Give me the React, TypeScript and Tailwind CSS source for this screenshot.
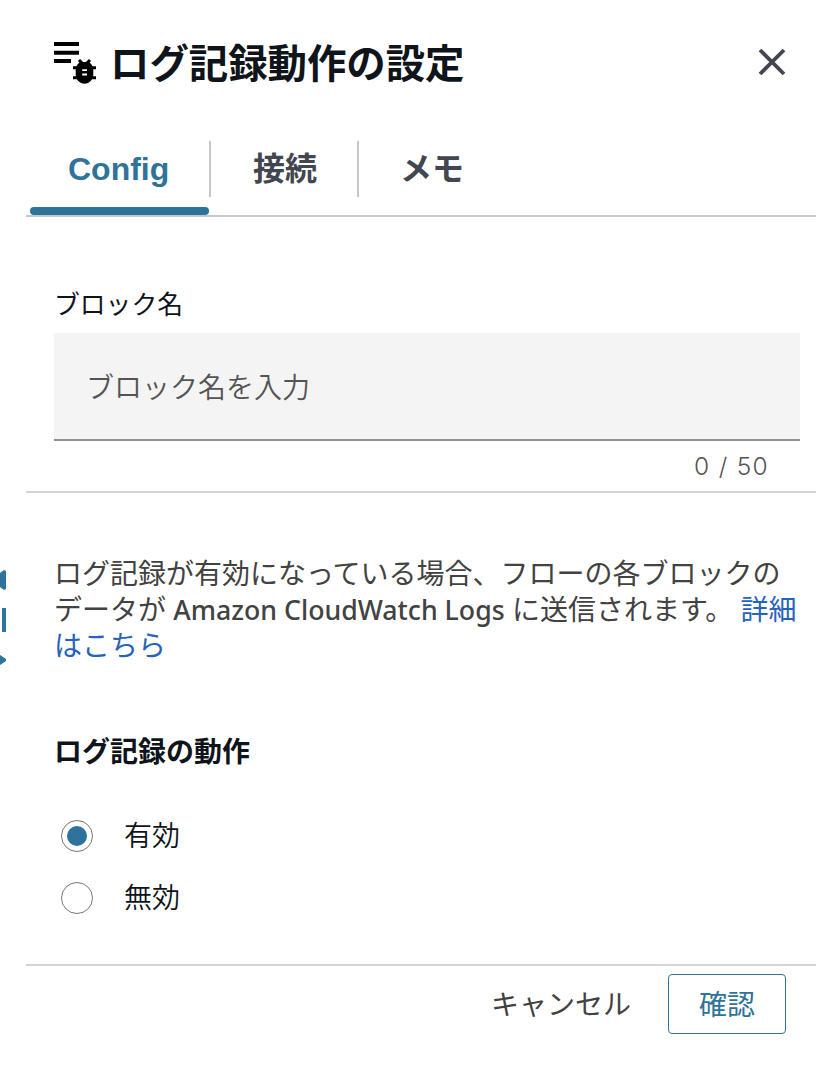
import React, { useState } from 'react';

const options = ['有効', '無効'];

const LogIcon = () => (
  <svg width="46" height="44" viewBox="0 0 46 44" className="mt-[41px] shrink-0">
    <path d="M0 1h25v4H0zM0 9.7h25v4H0zM0 18h17v4H0z" />
    <path d="M25 19l4 4M36 19l-4 4M19 26.8h23M19 36.8h23" stroke="#000" strokeWidth="3" />
    <path
      fillRule="evenodd"
      d="M26 21h9c3 2 4.300 5 4.300 8v4.500c0 5-3.900 9.200-8.800 9.200s-8.800-4.200-8.800-9.200V29c0-3 1.300-6 4.300-8zM28.200 28v2h4.800v-2zM28.200 32.500v2h4.800v-2z"
    />
  </svg>
);

const CanvasEdge = () => (
  <svg width="6" height="96" viewBox="0 0 6 96" className="mt-[570px] shrink-0" fill="#2e7399">
    <path d="M0 3 4 0l2 1v18l-2 1-4-3z" />
    <path d="M2 38h4v24H2z" />
    <path d="M0 85l6 4v2l-6 4z" />
  </svg>
);

const App: React.FC = () => {
  const [selected, setSelected] = useState('有効');

  return (
    <div className="flex h-[1086px] w-[816px] overflow-hidden bg-white font-['Noto_Sans_CJK_JP',sans-serif] text-[#0f141a]">
      <CanvasEdge />
      <div className="ml-5 flex w-[790px] flex-col">
        <header className="flex h-[141px] pl-7">
          <LogIcon />
          <h1 className="ml-[10px] mt-[31px] grow whitespace-nowrap text-[39.4px] font-bold leading-[60px]">ログ記録動作の設定</h1>
          <svg width="30" height="30" viewBox="0 0 30 30" className="mr-[29px] mt-[47px] shrink-0" stroke="#424650" strokeWidth="3.8">
            <path d="M3 3l24 24M27 3 3 27" />
          </svg>
        </header>

        <nav className="flex h-[76px] border-b-2 border-[#c6c6cd] text-[32px] font-bold leading-[56px] text-[#424650]">
          <div className="ml-1 flex w-[179px] flex-col text-[#2e7399]">
            <div className="h-[66px] pl-[38px] font-['Liberation_Sans',sans-serif]">Config</div>
            <div className="h-2 rounded-full bg-[#2e7399]" />
          </div>
          <div className="h-14 w-[150px] border-x-2 border-[#c6c6cd] pl-[2px] text-center leading-[51px]">接続</div>
          <div className="h-14 pl-[41px] leading-[51px]">メモ</div>
        </nav>

        <section className="h-[276px] border-b-2 border-[#d4d4d4] pl-7 pr-4">
          <label className="block pt-[66px] text-[25.8px] leading-10">ブロック名</label>
          <div className="mt-[10px] flex h-[108px] items-center border-b-2 border-[#919191] bg-[#f4f4f4] pl-8">
            <input
              placeholder="ブロック名を入力"
              className="w-full text-[28px] font-[350] outline-none placeholder:text-[#545454]"
            />
          </div>
          <div className="pr-[31px] pt-[5px] text-right font-['Inter',sans-serif] text-[24.5px] font-light leading-10 tracking-[1.3px] text-[#545454]">0 / 50</div>
        </section>

        <section className="h-[473px] border-b-2 border-[#d4d4d4] pl-7">
          <p className="h-[170px] whitespace-nowrap pt-[61px] text-[28px] leading-9 text-[#424242]">
            ログ記録が有効になっている場合、フローの各ブロックの
            <br />
            データが <span className="ml-px font-['Noto_Sans',sans-serif] text-[26.7px] font-medium leading-none">Amazon CloudWatch Logs</span>
            <span className="ml-px"> に送信されます。</span>{' '}
            <a className="ml-px text-[#2563bd]">詳細<br />はこちら</a>
          </p>
          <h2 className="mt-[67px] text-[28px] font-bold leading-10">ログ記録の動作</h2>
          <div className="mt-[35px] pl-[7px]">
            {options.map((option) => (
              <div key={option} onClick={() => setSelected(option)} className="flex h-[62px] items-center gap-[31px]">
                <span className="flex h-8 w-8 items-center justify-center rounded-full border border-[#777]">
                  {selected === option && <span className="h-5 w-5 rounded-full bg-[#2e7399]" />}
                </span>
                <span className="-mt-1 text-[28px] font-[350]">{option}</span>
              </div>
            ))}
          </div>
        </section>

        <footer className="flex items-center justify-end pr-[30px] pt-2 text-[28px]">
          <button className="mr-[37px] -mt-[2px] text-[#424242]">キャンセル</button>
          <button className="h-[60px] w-[118px] rounded border border-[#2e7399] pb-[2px] text-[#2e7399]">確認</button>
        </footer>
      </div>
    </div>
  );
};

export default App;
